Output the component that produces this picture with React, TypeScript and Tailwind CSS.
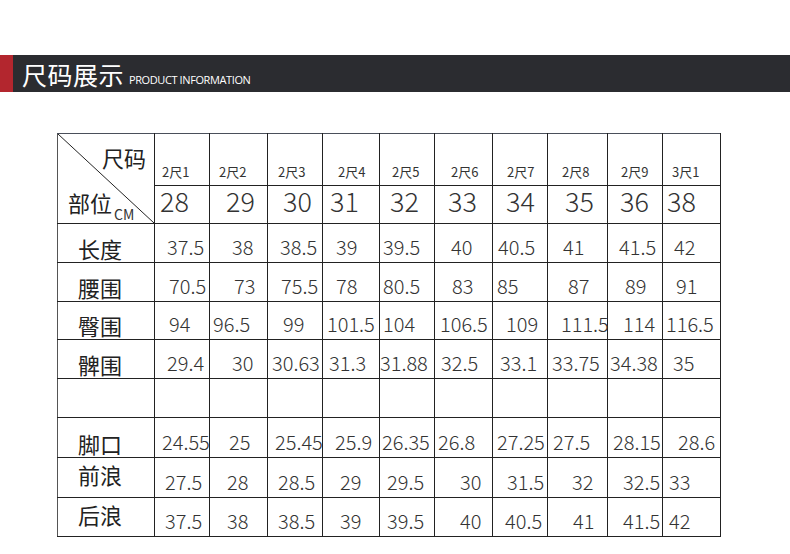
import React from 'react';

const heads = ['2尺1', '2尺2', '2尺3', '2尺4', '2尺5', '2尺6', '2尺7', '2尺8', '2尺9', '3尺1'];
const headPad = [7, 9, 10, 15, 12, 16, 14, 14, 13, 9];
const sizes = ['28', '29', '30', '31', '32', '33', '34', '35', '36', '38'];
const sizePad = [5, 16, 15, 7, 10, 13, 13, 17, 12, 4];
const widths = [97, 55, 58, 55, 57, 55, 58, 55, 60, 55, 58];

const rows: { label: string; h: number; top?: boolean; values: string[]; pad: number[] }[] = [
  { label: '长度', h: 39, values: ['37.5', '38', '38.5', '39', '39.5', '40', '40.5', '41', '41.5', '42'], pad: [12, 22, 12, 13, 3, 16, 5, 15, 11, 11] },
  { label: '腰围', h: 39, values: ['70.5', '73', '75.5', '78', '80.5', '83', '85', '87', '89', '91'], pad: [14, 24, 13, 13, 3, 17, 4, 20, 17, 13] },
  { label: '臀围', h: 38, values: ['94', '96.5', '99', '101.5', '104', '106.5', '109', '111.5', '114', '116.5'], pad: [14, 3, 15, 4, 3, 5, 13, 13, 15, 3] },
  { label: '髀围', h: 39, values: ['29.4', '30', '30.63', '31.3', '31.88', '32.5', '33.1', '33.75', '34.38', '35'], pad: [12, 22, 4, 6, 0, 6, 7, 4, 2, 10] },
  { label: '', h: 39, values: ['', '', '', '', '', '', '', '', '', ''], pad: [0, 0, 0, 0, 0, 0, 0, 0, 0, 0] },
  { label: '脚口', h: 40, values: ['24.55', '25', '25.45', '25.9', '26.35', '26.8', '27.25', '27.5', '28.15', '28.6'], pad: [7, 19, 7, 12, 2, 3, 4, 5, 5, 15] },
  { label: '前浪', h: 40, top: true, values: ['27.5', '28', '28.5', '29', '29.5', '30', '31.5', '32', '32.5', '33'], pad: [10, 17, 10, 17, 7, 25, 14, 24, 15, 6] },
  { label: '后浪', h: 39, top: true, values: ['37.5', '38', '38.5', '39', '39.5', '40', '40.5', '41', '41.5', '42'], pad: [10, 17, 10, 17, 7, 25, 12, 25, 15, 6] },
];

const font = { fontFamily: '"Noto Sans CJK SC", "Noto Sans", sans-serif' };

export default function App() {
  return (
    <div className="w-[790px] h-[554px] bg-white overflow-hidden" style={font}>
      <div className="mt-[55px] h-[37px] flex items-stretch bg-[#2b2c30]">
        <div className="w-[13px] bg-[#b3262e]" />
        <div className="flex items-end pl-[9px] pb-[3px]">
          <span className="text-[25px] leading-[30px] text-white tracking-[0.5px]">尺码展示</span>
          <span className="ml-[5px] mb-[2px] text-[11px] leading-[14px] text-white tracking-[-0.4px]" style={{ fontFamily: '"Open Sans", sans-serif' }}>
            PRODUCT INFORMATION
          </span>
        </div>
      </div>

      <table className="mt-[41px] ml-[57px] table-fixed border-collapse text-[#333]" style={{ width: 664 }}>
        <colgroup>
          {widths.map((w, i) => (
            <col key={i} style={{ width: w }} />
          ))}
        </colgroup>
        <tbody>
          <tr className="h-[52px]">
            <td rowSpan={2} className="relative border border-[#222] border-l-[#555] border-t-[#4a4f5a] p-0 align-top">
              <svg className="absolute inset-0 w-full h-full" preserveAspectRatio="none" viewBox="0 0 100 100">
                <line x1="0" y1="0" x2="100" y2="100" stroke="#222" strokeWidth="1" vectorEffect="non-scaling-stroke" />
              </svg>
              <div className="h-[89px] flex flex-col justify-between">
                <div className="flex justify-end pr-[8px] pt-[9px]">
                  <span className="text-[22px] leading-[28px] text-[#222]">尺码</span>
                </div>
                <div className="flex items-end pl-[10px] pb-[1px]">
                  <span className="mb-[6px] text-[22px] leading-[28px] text-[#222]">部位</span>
                  <span className="ml-[2px] text-[14px] leading-[16px] text-[#333]">CM</span>
                </div>
              </div>
            </td>
            {heads.map((h, i) => (
              <td key={h} className="border border-[#222] border-t-[#4a4f5a] align-bottom pb-[5px] text-[13px] leading-[16px] text-left whitespace-nowrap" style={{ paddingLeft: headPad[i] }}>
                {h}
              </td>
            ))}
          </tr>
          <tr className="h-[38px]">
            {sizes.map((s, i) => (
              <td key={s} className="border border-[#222] align-top text-left pt-0 pb-0 text-[27px] leading-[29px] font-light whitespace-nowrap" style={{ paddingLeft: sizePad[i] }}>
                {s}
              </td>
            ))}
          </tr>
          {rows.map((r, ri) => (
            <tr key={ri} style={{ height: r.h }}>
              <td className={`border border-[#222] border-l-[#555] pl-[20px] text-left text-[22px] leading-[24px] text-[#222] ${r.top ? 'align-top pt-[4px]' : 'align-bottom pb-[2px]'}`}>
                {r.label}
              </td>
              {r.values.map((v, vi) => (
                <td key={vi} className="border border-[#222] align-bottom text-left pb-[3px] pr-0 text-[20px] leading-[24px] font-light whitespace-nowrap overflow-visible" style={{ paddingLeft: r.pad[vi] }}>
                  {v}
                </td>
              ))}
            </tr>
          ))}
        </tbody>
      </table>
    </div>
  );
}
